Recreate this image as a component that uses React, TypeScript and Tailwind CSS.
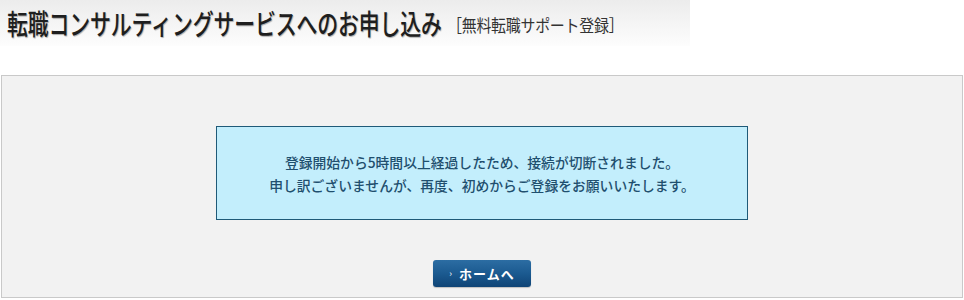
export default function App() {
  return (
    <div className="w-[964px] h-[300px] bg-white overflow-hidden" style={{ fontFamily: '"Noto Sans CJK JP", "Noto Sans", sans-serif' }}>
      <div className="w-[690px] h-[46px] bg-gradient-to-b from-[#ececec] to-[#fdfdfd] flex items-center pl-[7px]">
        <div className="w-[440px] h-[36px] shrink-0 flex items-center">
          <span className="inline-block whitespace-nowrap origin-left scale-x-[0.747] text-[28px] leading-[36px] font-medium text-[#1e1e1e] tracking-[-0.2px] [text-shadow:1px_1px_1px_rgba(0,0,0,0.3)]">
            転職コンサルティングサービスへのお申し込み
          </span>
        </div>
        <div className="w-[200px] h-[22px] shrink-0 flex items-center mt-[3px]">
          <span className="inline-block whitespace-nowrap origin-left scale-x-[0.88] text-[17px] leading-[22px] text-[#333] tracking-[-0.3px]">
            ［無料転職サポート登録］
          </span>
        </div>
      </div>
      <div className="mt-[29px] ml-[1px] w-[962px] h-[223px] bg-[#f2f2f2] border border-[#c9c9c9] flex flex-col items-center pt-[50px]">
        <div className="w-[532px] h-[94px] bg-[#c3eefc] border border-[#1f5a78] flex flex-col items-center justify-center text-[13.8px] leading-[23px] text-[#1f4f6e] font-medium pt-[1px]">
          <p>登録開始から5時間以上経過したため、接続が切断されました。</p>
          <p>申し訳ございませんが、再度、初めからご登録をお願いいたします。</p>
        </div>
        <button className="mt-[40px] w-[98px] h-[27px] rounded-[3px] bg-gradient-to-b from-[#2c6da3] via-[#1b5a90] to-[#0f4476] flex items-center justify-center text-white text-[13px] font-bold shadow-[0_1px_1px_rgba(0,0,0,0.2)]">
          <span className="text-[9px] mr-[7px] font-normal">›</span>
          <span className="tracking-[1px]">ホームへ</span>
        </button>
      </div>
    </div>
  );
}
